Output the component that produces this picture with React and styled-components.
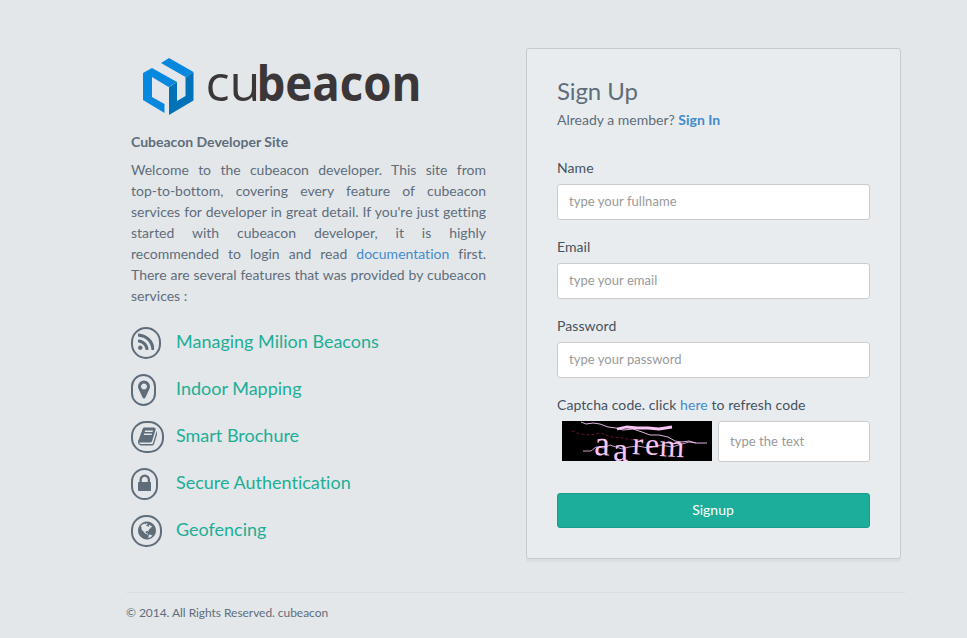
import React from "react";
import styled, { createGlobalStyle } from "styled-components";

const GlobalStyle = createGlobalStyle`
  * { box-sizing: border-box; }
  body {
    margin: 0;
    min-height: 638px;
    background: #e3e7ea;
    color: #5f6d7b;
    font: 14px/21px Lato, sans-serif;
    font-variant-ligatures: none;
  }
`;

const Page = styled.div`
  width: 780px;
  margin-left: 126px;
  padding-top: 48px;
`;

const Columns = styled.main`
  display: flex;
  justify-content: space-between;
  align-items: flex-start;
  height: 544px;
  padding: 0 5px;
`;

const Intro = styled.section`
  width: 355px;
`;

const Logo = styled.svg`
  display: block;
  width: 300px;
  height: 75px;
  overflow: visible;
`;

const LogoText = styled.text`
  font-family: "Open Sans", sans-serif;
  font-size: ${(p) => (p.$bold ? 48 : 49)}px;
  font-weight: ${(p) => (p.$bold ? 700 : 400)};
  fill: #3b3637;
`;

const SiteName = styled.h2`
  margin: 8px 0 7px;
  font-size: 14px;
  line-height: 21px;
  font-weight: 700;
`;

const Copy = styled.p`
  margin: 0;
  text-align: justify;
`;

const NoBreak = styled.span`
  white-space: nowrap;
`;

const Link = styled.a`
  color: #428bca;
  text-decoration: none;
  font-weight: ${(p) => (p.$strong ? 700 : 400)};
`;

const Features = styled.ul`
  display: grid;
  gap: 15px;
  margin: 21px 0 0;
  padding: 0;
  list-style: none;
`;

const Feature = styled.li`
  display: grid;
  grid-template-columns: 45px 1fr;
  height: 32px;
  color: #1cae97;
  font-size: 18px;
  line-height: 28px;
`;

const Badge = styled.span`
  display: flex;
  align-items: center;
  justify-content: center;
  width: ${(p) => p.$width}px;
  height: 32px;
  padding-bottom: 1px;
  border: 2px solid #5f6d7b;
  border-radius: 15px;
  color: #5f6d7b;
`;

const Glyph = styled.svg`
  display: block;
  height: 21px;
  fill: currentColor;
`;

const Panel = styled.form`
  width: 375px;
  height: 511px;
  padding: 25px 30px 30px;
  background: #e8ecef;
  border: 1px solid #c8cacc;
  border-radius: 3px;
  box-shadow: 0 3px 0 rgba(0, 0, 0, 0.035);
`;

const Title = styled.h1`
  margin: 0;
  font-size: 24px;
  line-height: 34px;
  font-weight: 400;
  letter-spacing: -0.1px;
`;

const Member = styled.p`
  margin: 1px 0 27px;
`;

const Field = styled.div`
  margin-bottom: 16px;
`;

const Label = styled.label`
  display: block;
  height: 27px;
  color: #45525f;
  letter-spacing: 0.08px;
`;

const Input = styled.input`
  display: block;
  width: 100%;
  height: ${(p) => (p.$tall ? 41 : 36)}px;
  padding: 0 11px 2px;
  border: 1px solid #cccccc;
  border-radius: 3px;
  background: #fff;
  font: 13px Lato, sans-serif;
  font-variant-ligatures: none;
  letter-spacing: 0.05px;
  outline: 0;
  &::placeholder { color: #999; opacity: 1; }
`;

const CaptchaRow = styled.div`
  display: grid;
  grid-template-columns: 150px 152px;
  gap: 6px;
  padding-left: 5px;
`;

const Captcha = styled.svg`
  display: block;
  width: 150px;
  height: 40px;
  background: #000;
`;

const Letter = styled.text`
  font: ${(p) => p.$size}px "Liberation Serif", serif;
  fill: #f9c5f5;
`;

const Submit = styled.button`
  display: block;
  width: 100%;
  height: 35px;
  margin-top: 31px;
  padding: 0 1px 2px 0;
  border: 1px solid #199d88;
  border-radius: 3px;
  background: #1cae9a;
  color: #fff;
  font: 14px Lato, sans-serif;
`;

const Footer = styled.footer`
  padding-top: 9px;
  border-top: 1px solid #dcdee0;
  font-size: 12px;
  line-height: 21px;
  letter-spacing: -0.05px;
`;

const features = [
  {
    name: "Managing Milion Beacons", badge: 30, width: 1408,
    path: "M384 1344q0 80-56 136t-136 56-136-56-56-136 56-136 136-56 136 56 56 136zm512 123q2 28-17 48-18 21-47 21h-135q-25 0-43-16.500t-20-41.500q-22-229-184.500-391.500t-391.500-184.500q-25-2-41.500-20t-16.500-43v-135q0-29 21-47 17-17 43-17h5q160 13 306 80.500t259 181.500q114 113 181.500 259t80.500 306zm512 2q2 27-18 47-18 20-46 20h-143q-26 0-44.500-17.500t-19.500-42.500q-12-215-101-408.500t-231.500-336-336-231.500-408.500-102q-25-1-42.500-19.500t-17.500-43.500v-143q0-28 20-46 18-18 44-18h3q262 13 501.500 120t425.500 294q187 186 294 425.500t120 501.500z",
  },
  {
    name: "Indoor Mapping", badge: 25, width: 1024,
    path: "M768 640q0-106-75-181t-181-75-181 75-75 181 75 181 181 75 181-75 75-181zm256 0q0 109-33 179l-364 774q-16 33-47.500 52t-67.500 19-67.500-19-46.500-52l-365-774q-33-70-33-179 0-212 150-362t362-150 362 150 150 362z",
  },
  {
    name: "Smart Brochure", badge: 33, width: 1664,
    path: "M1639 478q40 57 18 129l-275 906q-19 64-76.500 107.500t-122.500 43.500h-923q-77 0-148.500-53.500t-99.500-131.500q-24-67-2-127 0-4 3-27t4-37q1-8-3-21.500t-3-19.500q2-11 8-21t16.500-23.500 16.500-23.500q23-38 45-91.500t30-91.500q3-10 .5-30t-.5-28q3-11 17-28t17-23q21-36 42-92t25-90q1-9-2.500-32t.5-28q4-13 22-30.500t22-22.500q19-26 42.500-84.500t27.500-96.500q1-8-3-25.500t-2-26.500q2-8 9-18t18-23 17-21q8-12 16.500-30.500t15-35 16-36 19.500-32 26.500-23.500 36-11.500 47.500 5.500l-1 3q38-9 51-9h761q74 0 114 56t18 130l-274 906q-36 119-71.500 153.500t-128.500 34.500h-869q-27 0-38 15-11 16-1 43 24 70 144 70h923q29 0 56-15.500t35-41.500l300-987q7-22 5-57 38 15 59 43zm-1064 2q-4 13 2 22.500t20 9.500h608q13 0 25.500-9.500t16.500-22.500l21-64q4-13-2-22.500t-20-9.500h-608q-13 0-25.500 9.500t-16.500 22.500zm-83 256q-4 13 2 22.500t20 9.500h608q13 0 25.500-9.500t16.500-22.500l21-64q4-13-2-22.500t-20-9.500h-608q-13 0-25.500 9.500t-16.500 22.500z",
  },
  {
    name: "Secure Authentication", badge: 27, width: 1152,
    path: "M320 768h512v-192q0-106-75-181t-181-75-181 75-75 181v192zm832 96v576q0 40-28 68t-68 28h-960q-40 0-68-28t-28-68v-576q0-40 28-68t68-28h32v-192q0-184 132-316t316-132 316 132 132 316v192h32q40 0 68 28t28 68z",
  },
  {
    name: "Geofencing", badge: 31, width: 1536,
    path: "M768 128q209 0 385.500 103t279.500 279.500 103 385.500-103 385.500-279.500 279.500-385.500 103-385.500-103-279.500-279.500-103-385.500 103-385.500 279.500-279.500 385.500-103zm274 521q-2 1-9.500 9.500t-13.500 9.500q2 0 4.500-5t5-11 3.500-7q6-7 22-15 14-6 52-12 34-8 51 11-2-2 9.500-13t14.500-12q3-2 15-4.500t15-7.500l2-22q-12 1-17.500-7t-6.500-21q0 2-6 8 0-7-4.500-8t-11.500 1-9 1q-10-3-15-7.500t-8-16.500-4-15q-2-5-9.500-11t-9.500-10q-1-2-2.500-5.500t-3-6.500-4-5.500-5.500-2.500-7 5-7.500 10-4.500 5q-3-2-6-1.500t-4.500 1-4.500 3-5 3.500q-3 2-8.500 3t-8.500 2q15-5-1-11-10-4-16-3 9-4 7.500-12t-8.500-14h5q-1-4-8.500-8.500t-17.500-8.500-13-6q-8-5-34-9.500t-33-.5q-5 6-4.500 10.500t4 14 3.500 12.500q1 6-5.500 13t-6.500 12q0 7 14 15.500t10 21.500q-3 8-16 16t-16 12q-5 8-1.500 18.500t10.500 16.500q2 2 1.500 4t-3.500 4.500-5.500 4-6.500 3.500l-3 2q-11 5-20.500-6t-13.500-26q-7-25-16-30-23-8-29 1-5-13-41-26-25-9-58-4 6-1 0-15-7-15-19-12 3-6 4-17.500t1-13.500q3-13 12-23 1-1 7-8.500t9.500-13.500.5-6q35 4 50-11 5-5 11.500-17t10.500-17q9-6 14-5.500t14.500 5.500 14.500 5q14 1 15.500-11t-7.500-20q12 1 3-17-4-7-8-9-12-4-27 5-8 4 2 8-1-1-9.500 10.500t-16.500 17.500-16-5q-1-1-5.500-13.500t-9.500-13.500q-8 0-16 15 3-8-11-15t-24-8q19-12-8-27-7-4-20.500-5t-19.500 4q-5 7-5.500 11.500t5 8 10.500 5.500 11.500 4 8.500 3q14 10 8 14-2 1-8.500 3.500t-11.500 4.500-6 4q-3 4 0 14t-2 14q-5-5-9-17.500t-7-16.500q7 9-25 6l-10-1q-4 0-16 2t-20.500 1-13.500-8q-4-8 0-20 1-4 4-2-4-3-11-9.500t-10-8.500q-46 15-94 41 6 1 12-1 5-2 13-6.500t10-5.500q34-14 42-7l5-5q14 16 20 25-7-4-30-1-20 6-22 12 7 12 5 18-4-3-11.500-10t-14.500-11-15-5q-16 0-22 1-146 80-235 222 7 7 12 8 4 1 5 9t2.500 11 11.500-3q9 8 3 19 1-1 44 27 19 17 21 21 3 11-10 18-1-2-9-9t-9-4q-3 5 .5 18.500t10.500 12.500q-7 0-9.500 16t-2.500 35.500-1 23.500l2 1q-3 12 5.500 34.500t21.500 19.500q-13 3 20 43 6 8 8 9 3 2 12 7.500t15 10 10 10.500q4 5 10 22.500t14 23.500q-2 6 9.500 20t10.500 23q-1 0-2.500 1t-2.500 1q3 7 15.500 14t15.500 13q1 3 2 10t3 11 8 2q2-20-24-62-15-25-17-29-3-5-5.500-15.500t-4.500-14.500q2 0 6 1.500t8.500 3.500 7.500 4 2 3q-3 7 2 17.500t12 18.500 17 19 12 13q6 6 14 19.500t0 13.500q9 0 20 10t17 20q5 8 8 26t5 24q2 7 8.500 13.500t12.500 9.500l16 8 13 7q5 2 18.500 10.500t21.500 11.500q10 4 16 4t14.500-2.500 13.500-3.500q15-2 29 15t21 21q36 19 55 11-2 1 .5 7.500t8 15.500 9 14.500 5.500 8.500q5 6 18 15t18 15q6-4 7-9-3 8 7 20t18 10q14-3 14-32-31 15-49-18 0-1-2.500-5.500t-4-8.500-2.500-8.500 0-7.500 5-3q9 0 10-3.500t-2-12.500-4-13q-1-8-11-20t-12-15q-5 9-16 8t-16-9q0 1-1.500 5.500t-1.500 6.500q-13 0-15-1 1-3 2.500-17.500t3.500-22.500q1-4 5.500-12t7.500-14.500 4-12.500-4.500-9.500-17.500-2.500q-19 1-26 20-1 3-3 10.500t-5 11.500-9 7q-7 3-24 2t-24-5q-13-8-22.500-29t-9.500-37q0-10 2.500-26.500t3-25-5.500-24.500q3-2 9-9.500t10-10.500q2-1 4.500-1.500t4.500 0 4-1.500 3-6q-1-1-4-3-3-3-4-3 7 3 28.500-1.500t27.500 1.500q15 11 22-2 0-1-2.500-9.500t-.5-13.500q5 27 29 9 3 3 15.500 5t17.500 5q3 2 7 5.500t5.500 4.500 5-.5 8.500-6.500q10 14 12 24 11 40 19 44 7 3 11 2t4.500-9.500 0-14-1.500-12.500l-1-8v-18l-1-8q-15-3-18.500-12t1.500-18.500 15-18.500q1-1 8-3.500t15.500-6.500 12.500-8q21-19 15-35 7 0 11-9-1 0-5-3t-7.500-5-4.500-2q9-5 2-16 5-3 7.500-11t7.500-10q9 12 21 2 7-8 1-16 5-7 20.500-10.500t18.500-9.500q7 2 8-2t1-12 3-12q4-5 15-9t13-5l17-11q3-4 0-4 18 2 31-11 10-11-6-20 3-6-3-9.500t-15-5.500q3-1 11.500-.5t10.500-1.500q15-10-7-16-17-5-43 12zm-163 877q206-36 351-189-3-3-12.500-4.500t-12.500-3.500q-18-7-24-8 1-7-2.500-13t-8-9-12.500-8-11-7q-2-2-7-6t-7-5.500-7.500-4.500-8.500-2-10 1l-3 1q-3 1-5.500 2.500t-5.500 3-4 3 0 2.500q-21-17-36-22-5-1-11-5.500t-10.500-7-10-1.500-11.500 7q-5 5-6 15t-2 13q-7-5 0-17.500t2-18.500q-3-6-10.500-4.500t-12 4.500-11.500 8.500-9 6.500-8.500 5.500-8.500 7.500q-3 4-6 12t-5 11q-2-4-11.500-6.500t-9.500-5.500q2 10 4 35t5 38q7 31-12 48-27 25-29 40-4 22 12 26 0 7-8 20.500t-7 21.500q0 6 2 16z",
  },
];

const fields = [
  { label: "Name", hint: "type your fullname", type: "text" },
  { label: "Email", hint: "type your email", type: "email" },
  { label: "Password", hint: "type your password", type: "password" },
];

export default function App() {
  return (
    <>
      <GlobalStyle />
      <Page>
        <Columns>
          <Intro>
            <Logo viewBox="0 0 300 75" role="img" aria-label="cubeacon">
              <path fill="#0788df" d="M12 25L21 20 46 34 37.500 39 21 29 21 49 33.500 56 33.500 65 12 52Z" />
              <path fill="#0788df" d="M30 15L38 10 62.500 24 54.500 29Z" />
              <path fill="#0073b8" d="M62.500 24L62.500 52.500 38 67 38 39 46 34 46 53 54.500 48 54.500 29Z" />
              <LogoText x="74.5" y="53" textLength="55" lengthAdjust="spacingAndGlyphs">cu</LogoText>
              <LogoText $bold x="125.5" y="53" textLength="165" lengthAdjust="spacingAndGlyphs">beacon</LogoText>
            </Logo>
            <SiteName>Cubeacon Developer Site</SiteName>
            <Copy>
              Welcome to the cubeacon developer. This site from{" "}
              <NoBreak>top-to-bottom,</NoBreak> covering every
              feature of cubeacon services for developer in great detail. If you're just getting
              started with cubeacon developer, it is highly recommended to login and read{" "}
              <Link>documentation</Link> first. There are several features that was provided by
              cubeacon services :
            </Copy>
            <Features>
              {features.map((f) => (
                <Feature key={f.name}>
                  <Badge $width={f.badge}>
                    <Glyph viewBox={`0 0 ${f.width} 1792`} fillRule="evenodd"><path d={f.path} /></Glyph>
                  </Badge>
                  {f.name}
                </Feature>
              ))}
            </Features>
          </Intro>
          <Panel>
            <Title>Sign Up</Title>
            <Member>Already a member? <Link $strong>Sign In</Link></Member>
            {fields.map((f) => (
              <Field key={f.label}>
                <Label>{f.label}</Label>
                <Input type={f.type} placeholder={f.hint} />
              </Field>
            ))}
            <Label>Captcha code. click <Link>here</Link> to refresh code</Label>
            <CaptchaRow>
              <Captcha viewBox="0 0 150 40">
                <g fill="none" stroke="#f9c5f5">
                  <path stroke="#64152f" strokeDasharray="3 2" d="M10 10L18 13 28 14 39 12 49 16 61 17 70 19 84 18" />
                  <path strokeWidth=".9" d="M19 1L24 3 31 2 38 3 46 6 54 7 61 9 71 8 80 11 88 14 97 14 106 16 113 20 120 21 127 20 134 22 145 22" />
                  <path strokeWidth=".8" d="M21 30H29L34 26 42 27 48 24 60 28 67 26 76 25 86 27 99 24 110 26 120 23 127 21 134 22" />
                  <path strokeWidth="2.8" d="M55 8L65 6 75 7 86 7 97 8 110 6" />
                </g>
                <Letter x="32" y="34" $size={35} transform="rotate(2 32 34)">a</Letter>
                <Letter x="51" y="40" $size={34}>a</Letter>
                <Letter x="70" y="33" $size={32} transform="rotate(3 70 33)">r</Letter>
                <Letter x="83" y="34" $size={32}>e</Letter>
                <Letter x="97" y="35" $size={32} transform="rotate(3 97 35)">m</Letter>
              </Captcha>
              <Input $tall type="text" placeholder="type the text" />
            </CaptchaRow>
            <Submit type="button">Signup</Submit>
          </Panel>
        </Columns>
        <Footer>© 2014. All Rights Reserved. cubeacon</Footer>
      </Page>
    </>
  );
}
